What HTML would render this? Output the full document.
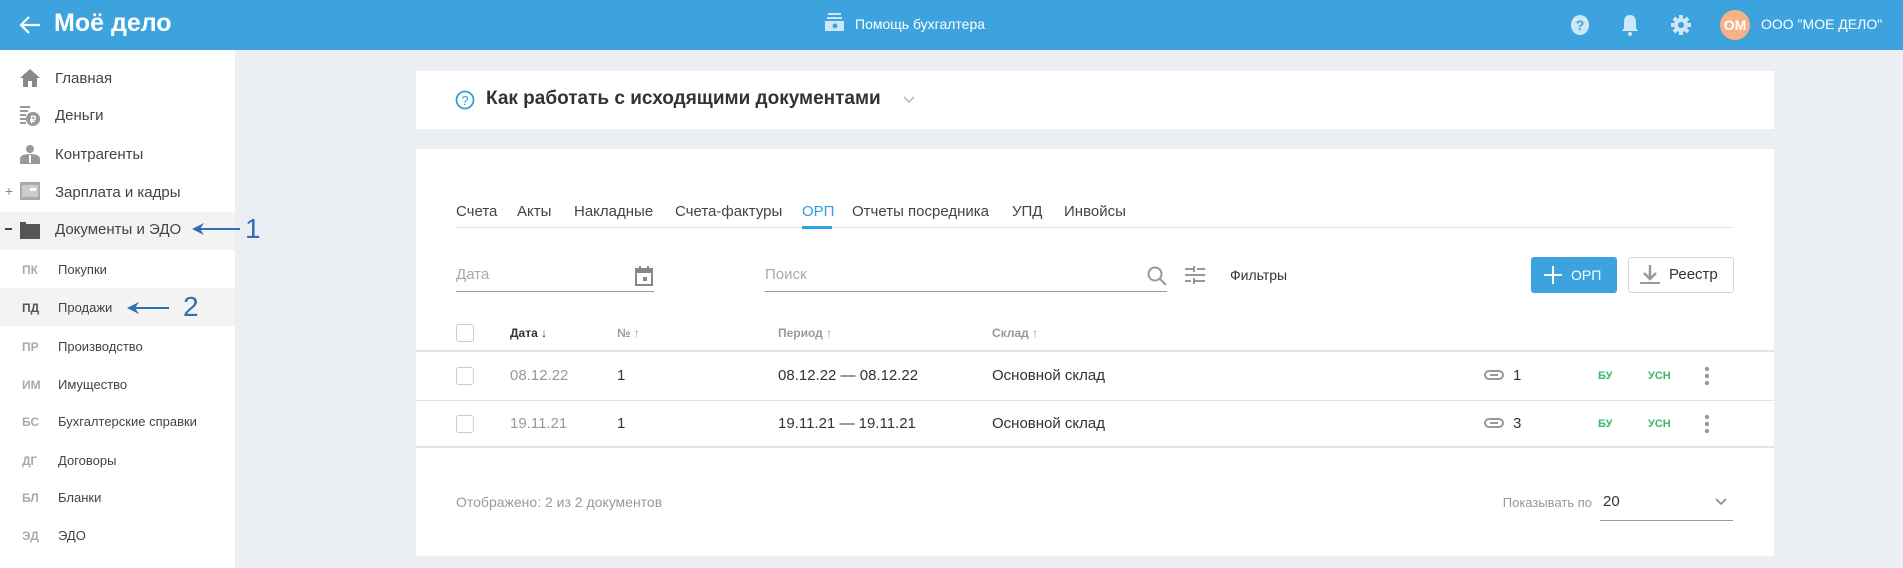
<!DOCTYPE html>
<html><head><meta charset="utf-8"><style>
*{margin:0;padding:0;box-sizing:border-box}
body{width:1903px;height:568px;overflow:hidden;background:#ebeef2;font-family:"Liberation Sans",sans-serif;color:#333;position:relative}
.a{position:absolute;white-space:nowrap}
.hdr{left:0;top:0;width:1903px;height:50px;background:#3da3de}
.side{left:0;top:50px;width:235px;height:518px;background:#fff}
.card{background:#fff}
.mi{font-size:15px;color:#444;left:55px}
.si{font-size:13px;color:#444;left:58px}
.ab{font-size:12px;font-weight:bold;color:#aaa;left:22px}
.tab{font-size:15px;color:#444;top:203px}
.th{font-size:12px;font-weight:bold;color:#999;top:326px}
.td{font-size:15px;color:#333}
.cb{width:18px;height:18px;border:1px solid #ccc;border-radius:3px;left:456px}
.g{font-size:11px;font-weight:bold;color:#3cb66e}
</style></head><body>
<div class="a hdr"></div>
<svg class="a" style="left:18px;top:14px" width="24" height="22" viewBox="0 0 24 22"><path d="M22 11H3M11 3L3 11l8 8" stroke="#fff" stroke-width="2.2" fill="none"/></svg>
<div class="a" style="left:54px;top:9px;font-size:25px;font-weight:bold;color:#fff">Моё дело</div>
<svg class="a" style="left:825px;top:12px" width="19" height="20" viewBox="0 0 19 20"><rect x="3" y="1" width="13" height="2" fill="#cfe6f7"/><rect x="2" y="5" width="15" height="2" fill="#cfe6f7"/><rect x="0" y="9" width="19" height="10" fill="#cfe6f7"/><circle cx="10" cy="14" r="2.5" fill="#3da3de"/></svg>
<div class="a" style="left:855px;top:16px;font-size:14px;color:#fff">Помощь бухгалтера</div>
<svg class="a" style="left:1570px;top:14px" width="20" height="22" viewBox="0 0 20 22"><ellipse cx="10" cy="11" rx="9" ry="10" fill="#cfe6f7"/><text x="10" y="16" font-size="14" font-weight="bold" text-anchor="middle" fill="#3da3de" font-family="Liberation Sans">?</text></svg>
<svg class="a" style="left:1620px;top:13px" width="20" height="24" viewBox="0 0 20 24"><path d="M10 2c4 0 6 3 6 7v6l2 3H2l2-3V9c0-4 2-7 6-7z" fill="#cfe6f7"/><circle cx="10" cy="21" r="2" fill="#cfe6f7"/></svg>
<svg class="a" style="left:1670px;top:14px" width="22" height="22" viewBox="0 0 22 22"><g fill="#cfe6f7"><circle cx="11" cy="11" r="7"/><rect x="9" y="1" width="4" height="20"/><rect x="1" y="9" width="20" height="4"/><rect x="9" y="1" width="4" height="20" transform="rotate(45 11 11)"/><rect x="9" y="1" width="4" height="20" transform="rotate(-45 11 11)"/></g><circle cx="11" cy="11" r="3" fill="#3da3de"/></svg>
<div class="a" style="left:1720px;top:10px;width:30px;height:30px;border-radius:15px;background:#f7b185;color:#fff;font-size:14px;font-weight:bold;text-align:center;line-height:30px">ОМ</div>
<div class="a" style="left:1761px;top:16px;font-size:14px;color:#fff">ООО "МОЕ ДЕЛО"</div>

<div class="a side"></div>
<div class="a" style="left:0;top:212px;width:235px;height:38px;background:#f3f3f3"></div>
<div class="a" style="left:0;top:288px;width:235px;height:38px;background:#f3f3f3"></div>
<svg class="a" style="left:20px;top:69px" width="20" height="18" viewBox="0 0 20 18"><path d="M10 0L0 9h3v9h5v-6h4v6h5V9h3z" fill="#888"/></svg>
<div class="a mi" style="top:70px">Главная</div>
<svg class="a" style="left:20px;top:106px" width="20" height="20" viewBox="0 0 20 20"><g fill="#999"><rect x="0" y="0" width="10" height="2"/><rect x="0" y="4" width="8" height="2"/><rect x="0" y="8" width="6" height="2"/><rect x="0" y="12" width="6" height="2"/><rect x="0" y="16" width="6" height="2"/><circle cx="13" cy="13" r="7"/></g><text x="13" y="17" font-size="10" fill="#fff" text-anchor="middle" font-family="Liberation Sans" font-weight="bold">₽</text></svg>
<div class="a mi" style="top:107px">Деньги</div>
<svg class="a" style="left:20px;top:144px" width="20" height="20" viewBox="0 0 20 20"><circle cx="10" cy="5" r="4" fill="#999"/><path d="M0 20v-5c0-3 3-5 10-5s10 2 10 5v5z" fill="#999"/><rect x="9" y="11" width="2" height="8" fill="#fff"/></svg>
<div class="a mi" style="top:146px">Контрагенты</div>
<div class="a" style="left:5px;top:183px;font-size:14px;color:#888">+</div>
<svg class="a" style="left:20px;top:182px" width="20" height="20" viewBox="0 0 20 20"><rect x="0" y="0" width="20" height="18" fill="#aaa"/><rect x="2" y="3" width="16" height="12" fill="#ccc"/><rect x="10" y="6" width="6" height="3" fill="#fff"/></svg>
<div class="a mi" style="top:184px">Зарплата и кадры</div>
<div class="a" style="left:5px;top:228px;width:7px;height:2px;background:#444"></div>
<svg class="a" style="left:20px;top:220px" width="20" height="20" viewBox="0 0 20 20"><path d="M0 2h6v2h14v15H0z" fill="#555"/></svg>
<div class="a mi" style="top:221px">Документы и ЭДО</div>
<svg class="a" style="left:192px;top:222px" width="50" height="14" viewBox="0 0 50 14"><path d="M48 7H4" stroke="#2f6db5" stroke-width="2"/><path d="M0 7l12-6-4 6 4 6z" fill="#2f6db5"/></svg>
<div class="a" style="left:245px;top:213px;font-size:28px;color:#2f6db5">1</div>
<div class="a ab" style="top:263px">ПК</div><div class="a si" style="top:262px">Покупки</div>
<div class="a ab" style="top:301px;color:#555">ПД</div><div class="a si" style="top:300px">Продажи</div>
<svg class="a" style="left:127px;top:301px" width="44" height="14" viewBox="0 0 44 14"><path d="M42 7H4" stroke="#2f6db5" stroke-width="2"/><path d="M0 7l12-6-4 6 4 6z" fill="#2f6db5"/></svg>
<div class="a" style="left:183px;top:291px;font-size:28px;color:#2f6db5">2</div>
<div class="a ab" style="top:340px">ПР</div><div class="a si" style="top:339px">Производство</div>
<div class="a ab" style="top:378px">ИМ</div><div class="a si" style="top:377px">Имущество</div>
<div class="a ab" style="top:415px">БС</div><div class="a si" style="top:414px">Бухгалтерские справки</div>
<div class="a ab" style="top:454px">ДГ</div><div class="a si" style="top:453px">Договоры</div>
<div class="a ab" style="top:491px">БЛ</div><div class="a si" style="top:490px">Бланки</div>
<div class="a ab" style="top:529px">ЭД</div><div class="a si" style="top:528px">ЭДО</div>

<div class="a card" style="left:416px;top:71px;width:1358px;height:58px"></div>
<svg class="a" style="left:455px;top:90px" width="20" height="20" viewBox="0 0 20 20"><circle cx="10" cy="10" r="8.5" stroke="#2ea0dc" stroke-width="1.8" fill="none"/><text x="10" y="15" font-size="13" text-anchor="middle" fill="#2ea0dc" font-family="Liberation Sans">?</text></svg>
<div class="a" style="left:486px;top:88px;font-size:19px;color:#333;font-weight:bold">Как работать с исходящими документами</div>
<svg class="a" style="left:903px;top:96px" width="12" height="8" viewBox="0 0 12 8"><path d="M1 1l5 5 5-5" stroke="#bbb" stroke-width="1.6" fill="none"/></svg>

<div class="a card" style="left:416px;top:149px;width:1358px;height:407px"></div>
<div class="a tab" style="left:456px">Счета</div>
<div class="a tab" style="left:517px">Акты</div>
<div class="a tab" style="left:574px">Накладные</div>
<div class="a tab" style="left:675px">Счета-фактуры</div>
<div class="a tab" style="left:802px;color:#2ea0dc">ОРП</div>
<div class="a tab" style="left:852px">Отчеты посредника</div>
<div class="a tab" style="left:1012px">УПД</div>
<div class="a tab" style="left:1064px">Инвойсы</div>
<div class="a" style="left:456px;top:227px;width:1277px;height:1px;background:#e2e2e2"></div>
<div class="a" style="left:802px;top:226px;width:30px;height:3px;background:#2ea0dc"></div>

<div class="a" style="left:456px;top:266px;font-size:15px;color:#aaa">Дата</div>
<svg class="a" style="left:635px;top:266px" width="18" height="20" viewBox="0 0 18 20"><rect x="1" y="3" width="16" height="16" fill="none" stroke="#888" stroke-width="2"/><rect x="1" y="3" width="16" height="4" fill="#888"/><rect x="4" y="0" width="2" height="4" fill="#888"/><rect x="12" y="0" width="2" height="4" fill="#888"/><rect x="8" y="11" width="4" height="4" fill="#888"/></svg>
<div class="a" style="left:456px;top:291px;width:198px;height:1px;background:#999"></div>
<div class="a" style="left:765px;top:266px;font-size:15px;color:#aaa">Поиск</div>
<svg class="a" style="left:1147px;top:266px" width="20" height="20" viewBox="0 0 20 20"><circle cx="8" cy="8" r="6.5" stroke="#999" stroke-width="2" fill="none"/><path d="M13 13l6 6" stroke="#999" stroke-width="2"/></svg>
<div class="a" style="left:765px;top:291px;width:402px;height:1px;background:#999"></div>
<svg class="a" style="left:1185px;top:266px" width="20" height="18" viewBox="0 0 20 18"><g fill="#999"><rect x="0" y="2" width="8" height="2"/><rect x="12" y="2" width="8" height="2"/><rect x="8" y="0" width="2" height="6"/><rect x="0" y="8" width="20" height="2"/><rect x="0" y="14" width="6" height="2"/><rect x="10" y="14" width="10" height="2"/><rect x="8" y="12" width="2" height="6"/></g></svg>
<div class="a" style="left:1230px;top:267px;font-size:14px;color:#333">Фильтры</div>
<div class="a" style="left:1531px;top:257px;width:86px;height:36px;background:#3da3de;border-radius:3px"></div>
<svg class="a" style="left:1544px;top:266px" width="18" height="18" viewBox="0 0 18 18"><path d="M9 0v18M0 9h18" stroke="#fff" stroke-width="2"/></svg>
<div class="a" style="left:1571px;top:267px;font-size:14px;color:#fff">ОРП</div>
<div class="a" style="left:1628px;top:257px;width:106px;height:36px;border:1px solid #d5d5d5;border-radius:3px;background:#fff"></div>
<svg class="a" style="left:1640px;top:265px" width="20" height="20" viewBox="0 0 20 20"><path d="M10 0v13M4 8l6 6 6-6" stroke="#999" stroke-width="2.5" fill="none"/><rect x="0" y="17" width="20" height="2" fill="#999"/></svg>
<div class="a" style="left:1669px;top:266px;font-size:15px;color:#333">Реестр</div>

<div class="a cb" style="top:324px"></div>
<div class="a th" style="left:510px;color:#333">Дата ↓</div>
<div class="a th" style="left:617px">№ ↑</div>
<div class="a th" style="left:778px">Период ↑</div>
<div class="a th" style="left:992px">Склад ↑</div>
<div class="a" style="left:416px;top:350px;width:1358px;height:2px;background:#e4e4e4"></div>
<div class="a cb" style="top:367px"></div>
<div class="a td" style="left:510px;top:367px;color:#999">08.12.22</div>
<div class="a td" style="left:617px;top:367px">1</div>
<div class="a td" style="left:778px;top:367px">08.12.22 — 08.12.22</div>
<div class="a td" style="left:992px;top:367px">Основной склад</div>
<svg class="a" style="left:1484px;top:370px" width="20" height="10" viewBox="0 0 20 10"><rect x="1" y="1" width="18" height="8" rx="4" stroke="#999" stroke-width="2" fill="none"/><path d="M6 5h8" stroke="#999" stroke-width="2"/></svg>
<div class="a td" style="left:1513px;top:367px">1</div>
<div class="a g" style="left:1598px;top:370px">БУ</div><div class="a g" style="left:1648px;top:370px">УСН</div>
<svg class="a" style="left:1704px;top:366px" width="6" height="20" viewBox="0 0 6 20"><g fill="#999"><circle cx="3" cy="3" r="2.2"/><circle cx="3" cy="10" r="2.2"/><circle cx="3" cy="17" r="2.2"/></g></svg>
<div class="a" style="left:416px;top:400px;width:1358px;height:1px;background:#e4e4e4"></div>
<div class="a cb" style="top:415px"></div>
<div class="a td" style="left:510px;top:415px;color:#999">19.11.21</div>
<div class="a td" style="left:617px;top:415px">1</div>
<div class="a td" style="left:778px;top:415px">19.11.21 — 19.11.21</div>
<div class="a td" style="left:992px;top:415px">Основной склад</div>
<svg class="a" style="left:1484px;top:418px" width="20" height="10" viewBox="0 0 20 10"><rect x="1" y="1" width="18" height="8" rx="4" stroke="#999" stroke-width="2" fill="none"/><path d="M6 5h8" stroke="#999" stroke-width="2"/></svg>
<div class="a td" style="left:1513px;top:415px">3</div>
<div class="a g" style="left:1598px;top:418px">БУ</div><div class="a g" style="left:1648px;top:418px">УСН</div>
<svg class="a" style="left:1704px;top:414px" width="6" height="20" viewBox="0 0 6 20"><g fill="#999"><circle cx="3" cy="3" r="2.2"/><circle cx="3" cy="10" r="2.2"/><circle cx="3" cy="17" r="2.2"/></g></svg>
<div class="a" style="left:416px;top:446px;width:1358px;height:2px;background:#e4e4e4"></div>

<div class="a" style="left:456px;top:494px;font-size:14px;color:#999">Отображено: 2 из 2 документов</div>
<div class="a" style="right:311px;top:495px;font-size:13px;color:#999">Показывать по</div>
<div class="a" style="left:1603px;top:493px;font-size:15px;color:#333">20</div>
<svg class="a" style="left:1715px;top:498px" width="12" height="8" viewBox="0 0 12 8"><path d="M1 1l5 5 5-5" stroke="#888" stroke-width="1.6" fill="none"/></svg>
<div class="a" style="left:1600px;top:520px;width:133px;height:1px;background:#999"></div>
</body></html>
